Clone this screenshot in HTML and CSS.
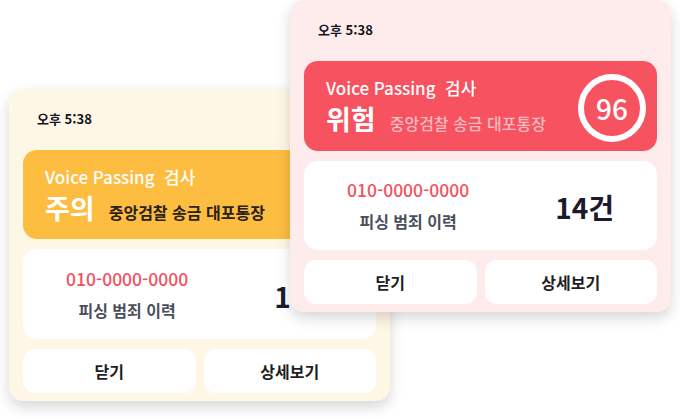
FILE: index.html
```html
<!DOCTYPE html>
<html lang="ko">
<head>
  <meta charset="UTF-8">
  <meta name="viewport" content="width=device-width,initial-scale=1">
  <title>Voice Passing 검사</title>
  <link rel="stylesheet" href="styles.css">
</head>
<body>
  <div class="stage">
    <!-- 주의 카드 (뒤) -->
    <div class="card card-warn">
      <div class="time">오후 5:38</div>
      <div class="banner">
        <div class="banner-text">
          <div class="banner-title">Voice Passing&nbsp; 검사</div>
          <div class="banner-row">
            <span class="level">주의</span>
            <span class="detail">중앙검찰 송금 대포통장</span>
          </div>
        </div>
      </div>
      <div class="info">
        <div class="info-left">
          <div class="phone">010-0000-0000</div>
          <div class="history">피싱 범죄 이력</div>
        </div>
        <div class="count">14건</div>
      </div>
      <div class="actions">
        <button class="btn">닫기</button>
        <button class="btn">상세보기</button>
      </div>
    </div>

    <!-- 위험 카드 (앞) -->
    <div class="card card-danger">
      <div class="time">오후 5:38</div>
      <div class="banner">
        <div class="banner-text">
          <div class="banner-title">Voice Passing&nbsp; 검사</div>
          <div class="banner-row">
            <span class="level">위험</span>
            <span class="detail">중앙검찰 송금 대포통장</span>
          </div>
        </div>
        <div class="score">96</div>
      </div>
      <div class="info">
        <div class="info-left">
          <div class="phone">010-0000-0000</div>
          <div class="history">피싱 범죄 이력</div>
        </div>
        <div class="count">14건</div>
      </div>
      <div class="actions">
        <button class="btn">닫기</button>
        <button class="btn">상세보기</button>
      </div>
    </div>
  </div>
</body>
</html>
```

FILE: styles.css
```css
* { box-sizing: border-box; }
body { margin: 0; background: #fff; font-family: "Noto Sans CJK KR", "Noto Sans", sans-serif; color: #1b1b22; }

.stage { display: grid; width: 680px; height: 419px; }
.card { grid-area: 1 / 1; width: 381px; height: 312px; border-radius: 14px; padding: 0 14px 8px; box-shadow: 0 6px 14px rgba(0,0,0,0.16); display: flex; flex-direction: column; }
.card-warn { margin: 89px 0 0 9px; background: #fef7e5; }
.card-danger { margin: 0 0 0 290px; background: #feeced; }

.time { height: 61px; padding: 20px 0 0 14px; font-size: 13px; font-weight: 700; line-height: 20px; color: #16161e; }

.banner { height: 90px; border-radius: 14px; padding: 16px 11px 12px 22px; display: flex; align-items: center; justify-content: space-between; color: #fff; }
.card-warn .banner { background: #fdbd41; }
.card-danger .banner { background: #f75260; }
.banner-text { align-self: flex-start; }
.banner-title { font-size: 17px; font-weight: 500; line-height: 22px; }
.banner-row { display: flex; align-items: baseline; margin-top: 2px; height: 36px; }
.level { font-size: 27px; font-weight: 700; line-height: 36px; }
.detail { margin-left: 14px; font-size: 16px; font-weight: 700; }
.card-warn .detail { color: #2a2118; }
.card-danger .detail { color: #f7bcc0; font-weight: 500; }

.score { width: 68px; height: 68px; border: 6px solid #fff; border-radius: 50%; display: flex; align-items: center; justify-content: center; font-size: 28px; font-weight: 500; }

.info { margin-top: 10px; height: 90px; background: #fff; border-radius: 14px; display: flex; align-items: center; justify-content: space-around; }
.info-left { text-align: center; }
.phone { font-size: 17.5px; font-weight: 500; line-height: 24px; color: #f4515e; }
.history { margin-top: 8px; font-size: 16px; font-weight: 700; line-height: 22px; color: #4a4f5b; }
.count { font-size: 28px; font-weight: 700; color: #1c1a2c; margin-top: 4px; }

.actions { margin-top: 10px; display: grid; grid-template-columns: 1fr 1fr; gap: 8px; }
.btn { height: 44px; border: none; border-radius: 12px; background: #fff; font-family: inherit; font-size: 16px; font-weight: 700; color: #1e1e24; }
```
